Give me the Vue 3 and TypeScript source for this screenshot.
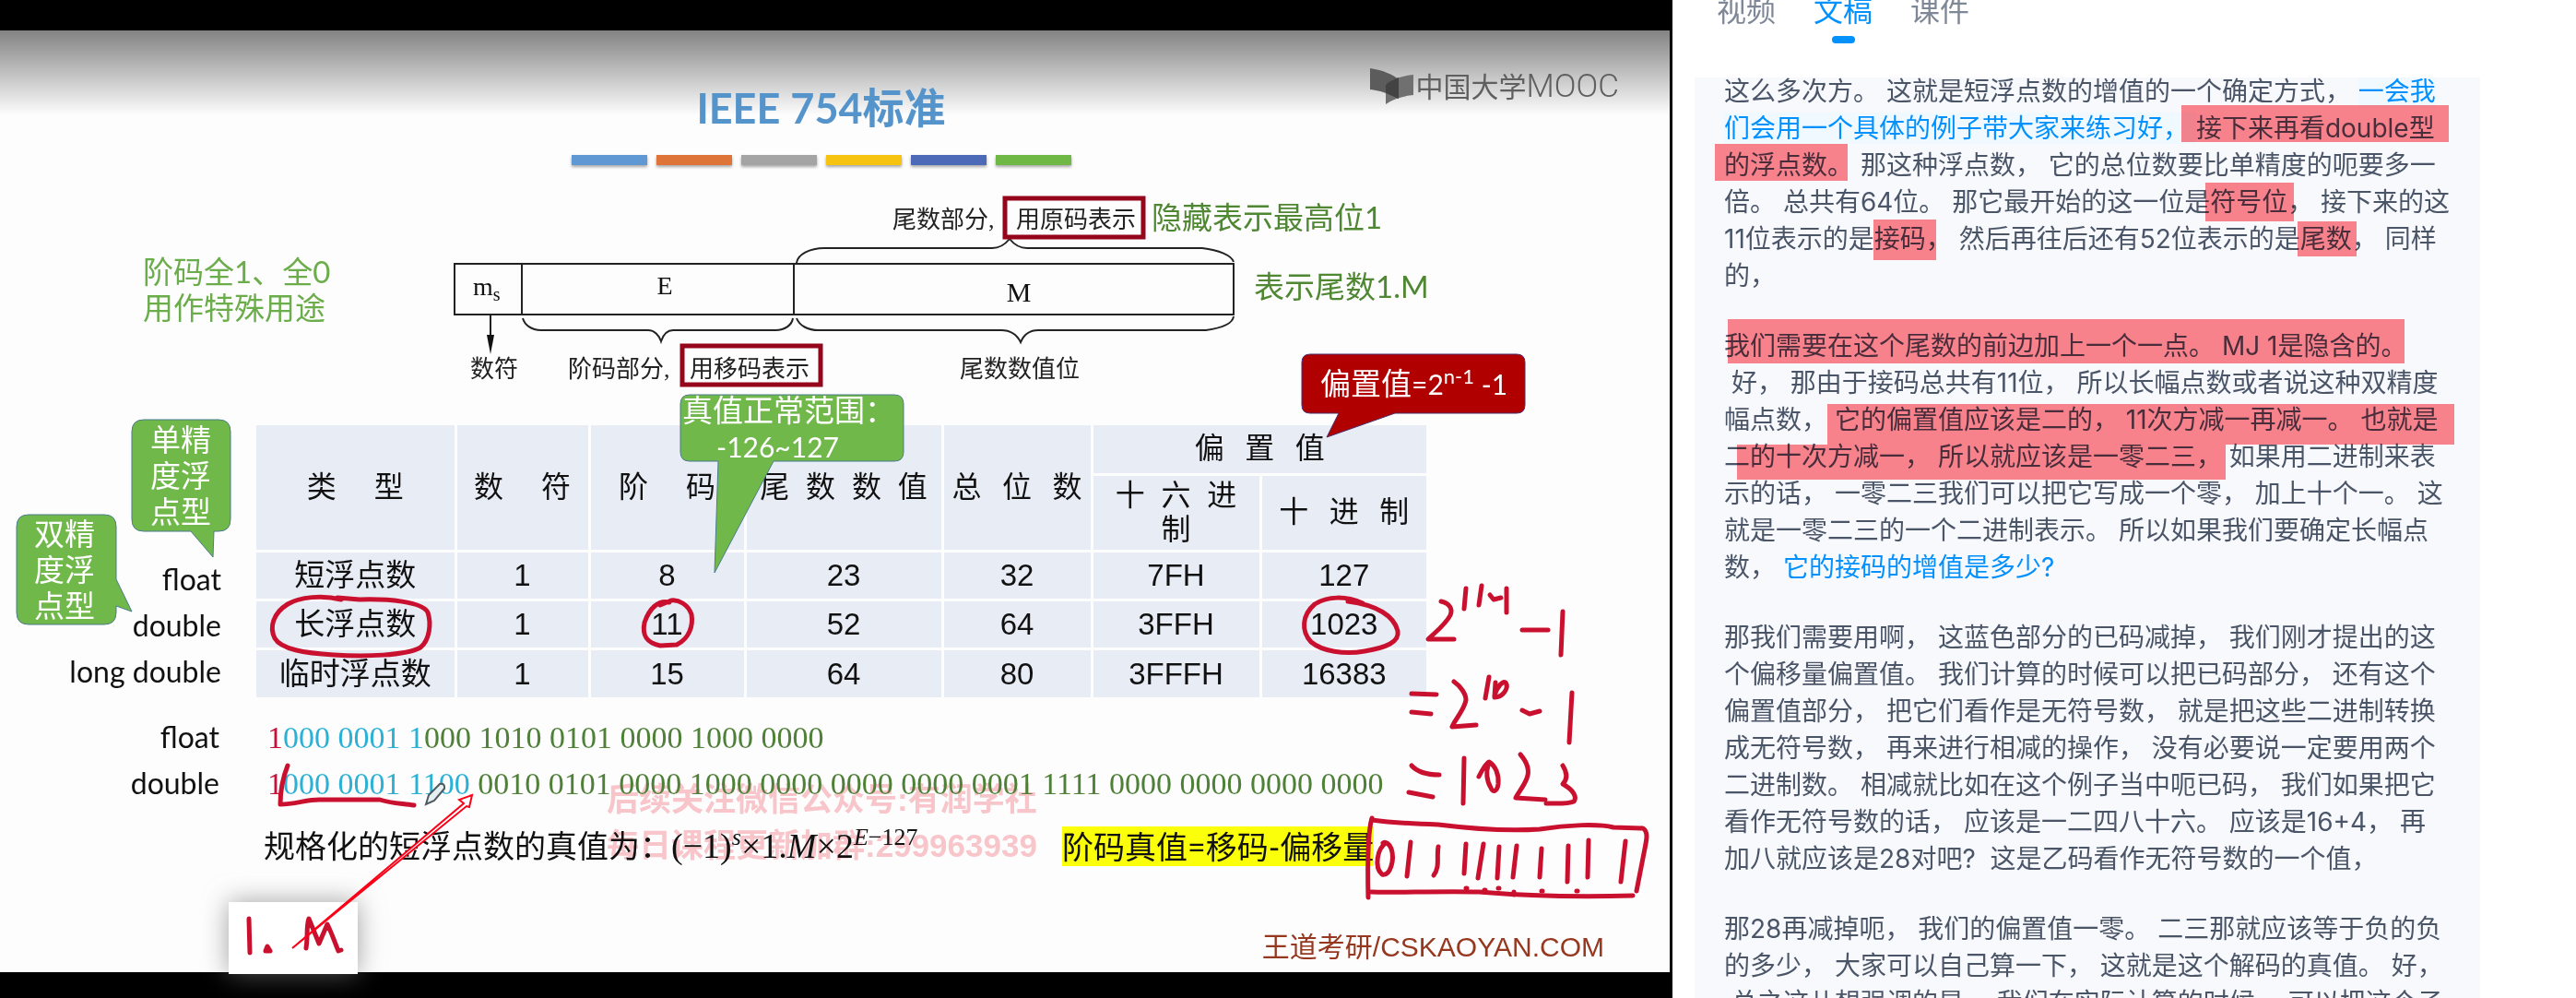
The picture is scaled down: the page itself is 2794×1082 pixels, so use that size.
<script setup lang="ts">
interface FormatRow {
  name: string
  cells: string[]
}

interface BitRun {
  kind: 'sign' | 'exponent' | 'fraction'
  text: string
}

interface BitRow {
  label: string
  runs: BitRun[]
}

interface Segment {
  text: string
  link?: boolean
  current?: boolean
}

interface Box {
  x: number
  y: number
  w: number
  h: number
}

const accentBars = ['blue', 'orange', 'grey', 'yellow', 'indigo', 'green']

const cLabels = ['float', 'double', 'long double']

const wide = '\u2003\u00a0'
const mid = '\u2002\u2009'
const narrow = '\u00a0\u00a0'
const spaced = (text: string, gap: string): string => text.split('').join(gap)

const formats: FormatRow[] = [
  { name: '短浮点数', cells: ['1', '8', '23', '32', '7FH', '127'] },
  { name: '长浮点数', cells: ['1', '11', '52', '64', '3FFH', '1023'] },
  { name: '临时浮点数', cells: ['1', '15', '64', '80', '3FFFH', '16383'] },
]

const bitRows: BitRow[] = [
  {
    label: 'float',
    runs: [
      { kind: 'sign', text: '1' },
      { kind: 'exponent', text: '000 0001 1' },
      { kind: 'fraction', text: '000 1010 0101 0000 1000 0000' },
    ],
  },
  {
    label: 'double',
    runs: [
      { kind: 'sign', text: '1' },
      { kind: 'exponent', text: '000 0001 1100' },
      {
        kind: 'fraction',
        text: ' 0010 0101 0000 1000 0000 0000 0000 0001 1111 0000 0000 0000 0000',
      },
    ],
  },
]

const penStrokes: string[] = [
  // circled table entries
  'M370 650C350 645 325 647 312 655C296 665 292 680 298 692C305 704 330 708 362 710C395 712 440 711 456 702C466 694 468 676 464 664C458 652 420 649 390 650L366 648',
  'M726 653C714 650 704 660 699 675C696 690 702 697 716 700L734 699C748 692 752 678 750 666C746 655 736 650 728 651L716 656',
  'M1478 654C1460 646 1440 646 1426 655C1412 667 1411 684 1422 696C1434 706 1458 710 1480 706C1504 702 1518 696 1516 684C1512 668 1494 656 1462 652',
  // 2^(11-1) - 1
  'M1563 652C1572 654 1576 660 1573 667C1568 677 1556 686 1549 693L1577 693',
  'M1590 638L1588 660',
  'M1607 635L1604 656',
  'M1616 645L1620 650L1628 648',
  'M1634 638L1634 664',
  'M1651 683L1679 683',
  'M1695 663L1693 710',
  // = 2^10 - 1
  'M1531 752L1558 753',
  'M1531 772L1552 774',
  'M1577 739C1584 744 1590 752 1590 759C1588 770 1578 780 1575 788L1601 786',
  'M1615 734L1611 757',
  'M1622 740L1621 756C1630 756 1637 746 1633 740C1630 738 1624 744 1621 754',
  'M1651 770L1659 774L1670 771',
  'M1705 751L1702 805',
  // = 1023
  'M1531 830C1538 838 1548 840 1561 840',
  'M1528 859L1554 864',
  'M1588 822L1587 871',
  'M1604 842C1608 834 1612 827 1615 826C1622 830 1626 840 1625 850C1624 858 1619 860 1617 854C1612 846 1612 836 1614 830',
  'M1649 818C1656 826 1660 834 1656 844C1652 854 1646 860 1644 865L1676 867',
  'M1695 830C1700 838 1700 845 1695 850C1706 856 1711 864 1707 869C1700 872 1688 871 1677 871',
  // boxed exponent field
  'M1488 887C1484 900 1483 930 1484 973',
  'M1488 889C1510 892 1530 893 1560 894C1600 899 1640 901 1670 899C1700 894 1735 893 1750 897L1782 898C1788 902 1786 910 1784 920L1775 966',
  'M1487 967C1510 968 1560 966 1604 967C1640 970 1700 973 1771 971',
  'M1503 914C1494 920 1490 940 1499 948C1508 950 1513 932 1509 920C1507 915 1503 912 1500 914',
  'M1530 913L1526 950',
  'M1560 918C1558 930 1562 940 1555 949',
  'M1590 915L1588 947',
  'M1609 915L1603 952',
  'M1626 918L1624 952',
  'M1645 917L1641 951',
  'M1672 920L1670 951',
  'M1701 917L1700 956',
  'M1723 911L1722 951',
  'M1763 912L1758 956',
  'M1590 963h1M1610 965h1M1625 963h1M1642 967v3M1672 966h1M1710 966h1',
  // exponent underline
  'M312 830C306 845 304 860 304 872C320 872 332 867 346 867L412 867C424 871 436 871 449 873',
]

const noteStrokes: string[] = [
  'M270 996L271 1033',
  'M290 1026L293 1031L288 1031Z',
  'M332 1028C334 1016 332 1004 335 996L346 1023L355 1002C360 1012 364 1024 367 1031L370 1030',
]

const paragraphs: Segment[][] = [
  [
    { text: '这么多次方。 这就是短浮点数的增值的一个确定方式， ' },
    { text: '一会我们会用一个具体的例子带大家来练习好， ', link: true, current: true },
    {
      text: '接下来再看double型的浮点数。 那这种浮点数， 它的总位数要比单精度的呃要多一倍。 总共有64位。 那它最开始的这一位是符号位， 接下来的这11位表示的是接码， 然后再往后还有52位表示的是尾数， 同样的，',
    },
  ],
  [
    {
      text: '我们需要在这个尾数的前边加上一个一点。 MJ 1是隐含的。\n\u00a0好， 那由于接码总共有11位， 所以长幅点数或者说这种双精度幅点数， 它的偏置值应该是二的， 11次方减一再减一。 也就是二的十次方减一， 所以就应该是一零二三， 如果用二进制来表示的话， 一零二三我们可以把它写成一个零， 加上十个一。 这就是一零二三的一个二进制表示。 所以如果我们要确定长幅点数， ',
    },
    { text: '它的接码的增值是多少?', link: true },
  ],
  [
    {
      text: '那我们需要用啊， 这蓝色部分的已码减掉， 我们刚才提出的这个偏移量偏置值。 我们计算的时候可以把已码部分， 还有这个偏置值部分， 把它们看作是无符号数， 就是把这些二进制转换成无符号数， 再来进行相减的操作， 没有必要说一定要用两个二进制数。 相减就比如在这个例子当中呃已码， 我们如果把它看作无符号数的话， 应该是一二四八十六。 应该是16+4， 再\n加八就应该是28对吧? \u00a0这是乙码看作无符号数的一个值，',
    },
  ],
  [
    {
      text: '那28再减掉呃， 我们的偏置值一零。 二三那就应该等于负的负的多少， 大家可以自己算一下， 这就是这个解码的真值。 好，\n\u00a0总之这儿想强调的是， 我们在实际计算的时候， 可以把这个子',
    },
  ],
]

// marker boxes, relative to the top left corner of the transcript
const markers: Box[] = [
  { x: 528, y: 30, w: 290, h: 40 },
  { x: 22, y: 72, w: 144, h: 40 },
  { x: 554, y: 114, w: 96, h: 42 },
  { x: 194, y: 154, w: 68, h: 44 },
  { x: 654, y: 156, w: 64, h: 38 },
  { x: 36, y: 262, w: 734, h: 48 },
  { x: 144, y: 354, w: 680, h: 44 },
  { x: 46, y: 398, w: 530, h: 38 },
]
</script>

<template>
  <div class="page">
    <main class="player">
      <section class="slide">
        <div class="shade"></div>
        <header class="slide-head">
          <h1>IEEE 754标准</h1>
          <div class="accents">
            <span v-for="bar in accentBars" :key="bar" :class="['accent', bar]"></span>
          </div>
        </header>

        <div class="brand">
          <svg width="48" height="42" viewBox="0 0 48 42" aria-hidden="true">
            <path d="M0 1C14 3 25 8 31 13V34C20 28 10 25 0 24Z" fill="#5c5c5c" />
            <path d="M17 40V19C24 12 36 9 47 8V30C36 31 26 34 17 40Z" fill="#707070" />
            <path d="M17 19C21 15 26 13 31 11V34L17 28Z" fill="#434343" />
          </svg>
          <span>中国大学<span class="brand-latin">MOOC</span></span>
        </div>

        <svg class="diagram" width="1811" height="230" viewBox="0 200 1811 230">
          <g fill="none" stroke="#222" stroke-width="2">
            <path d="M493 286H1338V341H493Z" />
            <path d="M566 286V341M861 286V341" />
            <path d="M532 341V366" />
            <path d="M567 345C569 352 576 358 587 358H703C710 358 715 364 717 370C719 364 723 358 730 358H841C852 358 859 352 860 345" />
            <path d="M864 345C867 353 876 358 888 358H1086C1096 358 1103 363 1107 371C1110 364 1116 358 1126 358H1308C1322 356 1337 352 1338 343" />
            <path d="M864 285C865 276 878 269 894 269H1076C1086 269 1091 264 1095 259C1099 264 1105 269 1114 269H1304C1322 271 1336 277 1338 284" />
          </g>
          <path d="M528 363H536L532 384Z" fill="#111" />
          <g class="field">
            <text x="513" y="320" font-size="28">m<tspan dy="6" font-size="20">s</tspan></text>
            <text x="721" y="319" font-size="28" text-anchor="middle">E</text>
            <text x="1105" y="327" font-size="30" text-anchor="middle">M</text>
          </g>
          <g class="caption">
            <text x="968" y="247">尾数部分,</text>
            <text x="1102" y="247">用原码表示</text>
            <text x="510" y="409">数符</text>
            <text x="616" y="409">阶码部分,</text>
            <text x="748" y="409">用移码表示</text>
            <text x="1041" y="409">尾数数值位</text>
          </g>
          <g fill="none" stroke="#95051c" stroke-width="5">
            <rect x="1090" y="215" width="150" height="42" />
            <rect x="740" y="375" width="150" height="42" />
          </g>
          <g class="remark">
            <text x="1249" y="248">隐藏表示最高位1</text>
            <text x="1360" y="323">表示尾数1.M</text>
          </g>
          <g class="remark light">
            <text x="155" y="307">阶码全1、全0</text>
            <text x="155" y="346">用作特殊用途</text>
          </g>
        </svg>

        <div class="formats">
          <ul class="c-types">
            <li v-for="label in cLabels" :key="label">{{ label }}</li>
          </ul>
          <table>
            <colgroup>
              <col class="c1" />
              <col class="c2" />
              <col class="c3" />
              <col class="c4" />
              <col class="c5" />
              <col class="c6" />
              <col class="c7" />
            </colgroup>
            <thead>
              <tr>
                <th rowspan="2">{{ spaced('类型', wide) }}</th>
                <th rowspan="2">{{ spaced('数符', wide) }}</th>
                <th rowspan="2">{{ spaced('阶码', wide) }}</th>
                <th rowspan="2">{{ spaced('尾数数值', narrow) }}</th>
                <th rowspan="2">{{ spaced('总位数', mid) }}</th>
                <th colspan="2">{{ spaced('偏置值', mid) }}</th>
              </tr>
              <tr class="sub">
                <th>{{ spaced('十六进', narrow) }}<br />制</th>
                <th>{{ spaced('十进制', mid) }}</th>
              </tr>
            </thead>
            <tbody>
              <tr v-for="row in formats" :key="row.name">
                <td>{{ row.name }}</td>
                <td v-for="(cell, i) in row.cells" :key="i">{{ cell }}</td>
              </tr>
            </tbody>
          </table>
        </div>

        <div class="examples">
          <div v-for="row in bitRows" :key="row.label" class="bits">
            <span class="bits-label">{{ row.label }}</span>
            <span class="bits-value"><span v-for="run in row.runs" :key="run.kind" :class="run.kind">{{ run.text }}</span></span>
          </div>
          <div class="formula">
            <p>规格化的短浮点数的真值为：<span class="math">(−1)<sup><i>s</i></sup>×1.<i>M</i>×2<sup><i>E</i>−127</sup></span></p>
            <mark>阶码真值=移码-偏移量</mark>
          </div>
          <div class="watermark">
            <div>后续关注微信公众号:有润学社</div>
            <div>每日课程更新加群:299963939</div>
          </div>
        </div>

        <footer>王道考研/CSKAOYAN.COM</footer>

        <svg class="overlay" width="1811" height="1021" viewBox="0 33 1811 1021">
          <g fill="#70b84a" stroke="#4a7d8c" stroke-width="1">
            <path d="M156 455H237Q250 455 250 468V563Q250 576 237 576H232L231 604L207 576H156Q143 576 143 563V468Q143 455 156 455Z" />
            <path d="M31 558H113Q126 558 126 571V628L143 663L126 657V664Q126 677 113 677H31Q18 677 18 664V571Q18 558 31 558Z" />
            <path d="M748 428H970Q980 428 980 438V490Q980 500 970 500H839L775 621L779 500H748Q738 500 738 490V438Q738 428 748 428Z" />
          </g>
          <path d="M1421 384H1645Q1654 384 1654 393V439Q1654 448 1645 448H1513L1439 474L1452 448H1421Q1412 448 1412 439V393Q1412 384 1421 384Z" fill="#b00000" stroke="#4a2f6b" />
          <g class="callout-text">
            <text x="163" y="489">单精</text>
            <text x="163" y="528">度浮</text>
            <text x="163" y="567">点型</text>
            <text x="37" y="591">双精</text>
            <text x="37" y="630">度浮</text>
            <text x="37" y="669">点型</text>
            <text x="740" y="457">真值正常范围：</text>
            <text x="777" y="496" font-size="30">-126~127</text>
            <text x="1432" y="428">偏置值<tspan font-size="30">=2</tspan><tspan dy="-12" font-size="22">n-1</tspan><tspan dy="12" font-size="30"> -1</tspan></text>
          </g>
          <g class="pen">
            <path v-for="d in penStrokes" :key="d" :d="d" />
          </g>
          <path d="M462 872L465 862L477 850Q483 849 482 855L471 868Z" fill="#e6eff2" stroke="#4d5a60" stroke-width="2" />
        </svg>
      </section>

      <svg class="note" width="320" height="242" viewBox="228 840 320 242">
        <rect class="note-card" x="248" y="978" width="140" height="78" fill="#fff" />
        <g class="pen">
          <path v-for="d in noteStrokes" :key="d" :d="d" />
        </g>
        <path d="M317 1028L503 871L498 867L512 862L509 875L506 874Z" fill="#fff" stroke="#fb0017" stroke-width="2" />
      </svg>
    </main>

    <aside class="side">
      <nav class="tabs">
        <a href="#video">视频</a>
        <a href="#transcript" class="active">文稿</a>
        <a href="#slides">课件</a>
      </nav>
      <article class="transcript">
        <div class="lines">
          <p v-for="(para, i) in paragraphs" :key="i"><span v-for="(seg, j) in para" :key="j" :class="{ link: seg.link, current: seg.current }">{{ seg.text }}</span></p>
        </div>
        <svg class="markers" width="852" height="998">
          <rect v-for="(m, i) in markers" :key="i" :x="m.x" :y="m.y" :width="m.w" :height="m.h" />
        </svg>
      </article>
    </aside>
  </div>
</template>

<style>
body {
  margin: 0;
  background: #fff;
}
</style>

<style scoped>
.page {
  display: grid;
  grid-template-columns: minmax(0, 1814fr) minmax(0, 980fr);
  grid-template-rows: 100vh;
  overflow: hidden;
  font-family: Inter, "Noto Sans CJK SC", sans-serif;
}

.player {
  position: relative;
  box-sizing: border-box;
  padding: 33px 3px 28px 0;
  background: #000;
  overflow: hidden;
}

.slide {
  position: relative;
  display: flex;
  flex-direction: column;
  height: 100%;
  background: #fdfdfd;
  overflow: hidden;
  font-family: Lato, "Noto Sans CJK SC", sans-serif;
}

.shade {
  position: absolute;
  inset: 0 0 auto;
  height: 92px;
  background: linear-gradient(#838383, #c0c0c0 50%, #fdfdfd);
}

.slide-head {
  position: relative;
  display: flex;
  flex-direction: column;
  align-items: center;
  gap: 20px;
  height: 167px;
  box-sizing: border-box;
  padding: 53px 30px 0 0;
}

h1 {
  margin: 0;
  font-size: 45px;
  line-height: 62px;
  font-weight: 700;
  color: #5594cb;
}

.accents {
  display: flex;
  gap: 10px;
}

.accent {
  width: 82px;
  height: 11px;
  box-shadow: 0 2px 3px rgba(0, 0, 0, 0.35);
}

.blue { background: #6098d3; }
.orange { background: #df7439; }
.grey { background: #a4a4a4; }
.yellow { background: #f6c410; }
.indigo { background: #4c6ab8; }
.green { background: #70b846; }

.brand {
  position: absolute;
  top: 39px;
  right: 55px;
  display: flex;
  align-items: center;
  gap: 2px;
  font-size: 30px;
  line-height: 42px;
  font-weight: 400;
  color: #5f5f5f;
}

.brand-latin {
  font-family: Roboto, sans-serif;
  font-weight: 300;
  font-size: 35px;
}

.diagram {
  position: relative;
  flex: none;
  display: block;
}

.field {
  font-family: "Liberation Serif", serif;
  fill: #111;
}

.caption {
  font-family: "Liberation Serif", "Noto Sans CJK SC", serif;
  font-size: 26px;
  fill: #222;
}

.remark {
  font-size: 33px;
  fill: #4f8732;
}

.remark.light {
  fill: #6cad4b;
}

.formats {
  position: relative;
  display: flex;
  margin-top: 31px;
}

.c-types {
  flex: none;
  width: 278px;
  box-sizing: border-box;
  margin: 0;
  padding: 142px 38px 0 0;
  list-style: none;
  text-align: right;
  font-size: 32px;
  line-height: 50px;
  color: #111;
}

table {
  border-collapse: collapse;
  border-style: hidden;
  table-layout: fixed;
  width: 1269px;
  font-family: "Liberation Sans", "Noto Sans CJK SC", sans-serif;
  font-size: 33px;
  color: #111;
}

.c1 { width: 216px; }
.c2 { width: 145px; }
.c3 { width: 169px; }
.c4 { width: 214px; }
.c5 { width: 162px; }
.c6 { width: 183px; }
.c7 { width: 180px; }

th,
td {
  padding: 0;
  border: 3px solid #fdfdfd;
  background: #e8ecf5;
  text-align: center;
  vertical-align: middle;
  font-weight: 400;
  line-height: 37px;
  white-space: nowrap;
}

th {
  font-size: 32px;
}

tr {
  height: 53px;
}

tr.sub {
  height: 83px;
}

.examples {
  position: relative;
  margin-top: 18px;
}

.bits {
  position: relative;
  z-index: 1;
  display: flex;
  align-items: baseline;
  height: 50px;
  line-height: 50px;
  white-space: pre;
}

.bits-label {
  width: 238px;
  margin-right: 52px;
  text-align: right;
  font-size: 32px;
  color: #111;
}

.bits-value {
  font-family: "Liberation Serif", serif;
  font-size: 34px;
}

.sign { color: #c4123a; }
.exponent { color: #2cb1d6; }
.fraction { color: #4f8038; }

.formula {
  position: relative;
  z-index: 1;
  display: flex;
  align-items: center;
  height: 50px;
  margin: 18px 0 0 286px;
  font-size: 34px;
  color: #111;
}

.formula p {
  width: 866px;
  margin: 0;
  line-height: 44px;
  white-space: nowrap;
}

.math {
  font-family: "Liberation Serif", serif;
  font-size: 38px;
}

.math sup {
  font-size: 26px;
  line-height: 0;
}

mark {
  height: 43px;
  line-height: 43px;
  background: #fcff0a;
  color: #111;
}

.watermark {
  position: absolute;
  top: 68px;
  left: 658px;
  font-family: "Liberation Sans", "Noto Sans CJK SC", sans-serif;
  font-size: 35px;
  line-height: 50px;
  font-weight: 700;
  color: rgba(240, 70, 85, 0.3);
  white-space: nowrap;
}

footer {
  position: absolute;
  right: 71px;
  bottom: 9px;
  font-family: "Liberation Sans", "Noto Sans CJK SC", sans-serif;
  font-size: 30px;
  line-height: 36px;
  color: #96381f;
}

.overlay {
  position: absolute;
  top: 0;
  left: 0;
  z-index: 2;
}

.callout-text {
  font-size: 33px;
  fill: #fff;
}

.pen {
  fill: none;
  stroke: #c9112f;
  stroke-width: 5;
  stroke-linecap: round;
  stroke-linejoin: round;
}

.note {
  position: absolute;
  left: 228px;
  bottom: 0;
  z-index: 3;
  overflow: visible;
}

.note-card {
  filter: drop-shadow(0 0 14px rgba(120, 120, 120, 0.7));
}

.side {
  display: flex;
  flex-direction: column;
  box-sizing: border-box;
  padding: 0 104px 0 24px;
}

.tabs {
  flex: none;
  display: flex;
  gap: 41px;
  height: 84px;
  box-sizing: border-box;
  padding-left: 24px;
  font-size: 32px;
  line-height: 24px;
}

.tabs a {
  position: relative;
  color: #7f8896;
  text-decoration: none;
}

.tabs .active {
  color: #0091ff;
}

.tabs .active::after {
  content: "";
  position: absolute;
  top: 39px;
  left: 20px;
  width: 25px;
  height: 8px;
  border-radius: 4px;
  background: #0091ff;
}

.transcript {
  position: relative;
  flex: 1;
  min-height: 0;
  overflow: hidden;
  padding: 0 30px 0 32px;
  background: #f8f9fd;
}

.lines {
  margin-top: -5px;
}

.lines p {
  margin: 0 0 36px;
  font-size: 28px;
  line-height: 40px;
  color: #4a5568;
  white-space: pre-wrap;
}

.link {
  color: #0091ff;
}

.current {
  background: #f0f9ff;
}

.markers {
  position: absolute;
  top: 0;
  left: 0;
  mix-blend-mode: multiply;
}

.markers rect {
  fill: #ff858d;
}
</style>
